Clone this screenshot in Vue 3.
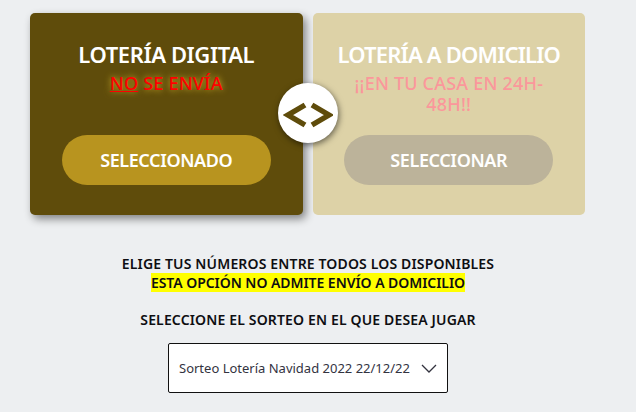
<script setup>
const cards = [
  { title: 'LOTERÍA A DOMICILIO', btn: 'SELECCIONAR' }
]
</script>

<template>
  <div class="page">
    <div class="cards">
      <section class="card active">
        <h2>LOTERÍA DIGITAL</h2>
        <p class="sub"><u>NO</u> SE ENVÍA</p>
        <button class="btn">SELECCIONADO</button>
      </section>
      <section class="card inactive">
        <h2>{{ cards[0].title }}</h2>
        <p class="sub">¡¡EN TU CASA EN 24H-48H!!</p>
        <button class="btn">{{ cards[0].btn }}</button>
      </section>
      <div class="swap">
        <svg width="50" height="26" viewBox="0 0 50 26" fill="none" stroke="#5f4c0b" stroke-width="5.5">
          <path d="M22 3 L5 13 L22 23" />
          <path d="M29 3 L46 13 L29 23" />
        </svg>
      </div>
    </div>
    <div class="info">
      <p>ELIGE TUS NÚMEROS ENTRE TODOS LOS DISPONIBLES</p>
      <p class="tight"><mark>ESTA OPCIÓN NO ADMITE ENVÍO A DOMICILIO</mark></p>
    </div>
    <p class="label">SELECCIONE EL SORTEO EN EL QUE DESEA JUGAR</p>
    <div class="select">
      <span>Sorteo Lotería Navidad 2022 22/12/22</span>
      <svg width="16" height="9" viewBox="0 0 16 9" fill="none" stroke="#33333f" stroke-width="1.3">
        <path d="M1 1 L8 8 L15 1" />
      </svg>
    </div>
  </div>
</template>

<style>
html, body { margin: 0; background: #edeff1; }
</style>

<style scoped>
.page {
  width: 616px;
  height: 412px;
  box-sizing: border-box;
  padding-top: 13px;
  overflow: hidden;
  background: #edeff1;
  font-family: "Noto Sans", "Open Sans", sans-serif;
  color: #0e0e12;
  display: flex;
  flex-direction: column;
  align-items: center;
}
.cards {
  position: relative;
  display: flex;
  gap: 10px;
  width: 555px;
  align-self: flex-start;
  margin-left: 30px;
}
.card {
  width: 272.5px;
  height: 202px;
  box-sizing: border-box;
  border-radius: 5px;
  padding: 27px 32px 0;
  display: flex;
  flex-direction: column;
  align-items: center;
  text-align: center;
}
.active {
  background: #5f4c0b;
  box-shadow: 3px 4px 8px rgba(0, 0, 0, 0.45);
}
.inactive { background: #ddd2a7; }
h2 {
  margin: 0;
  font-size: 22px;
  line-height: 29px;
  font-weight: 600;
  letter-spacing: -0.4px;
  white-space: nowrap;
  color: #fff;
}
.inactive h2 { letter-spacing: -0.8px; }
.sub {
  margin: 4px 0 0;
  height: 48px;
  font-size: 18px;
  line-height: 21px;
  letter-spacing: 0.2px;
  font-weight: 500;
}
.active .sub {
  color: #ff0000;
  text-shadow: 0 0 6px #d8ba30;
}
.inactive .sub {
  color: #fb979b;
  padding: 0 2px;
  width: 200px;
}
.btn {
  margin-top: 14px;
  width: 209px;
  height: 50px;
  flex: none;
  border: 0;
  border-radius: 25px;
  color: #fff;
  font: 600 18px "Noto Sans", sans-serif;
  letter-spacing: -0.4px;
}
.active .btn { background: #b8941f; }
.inactive .btn { background: #bcb39a; }
.swap {
  position: absolute;
  left: 248px;
  top: 70px;
  width: 60px;
  height: 60px;
  border-radius: 50%;
  background: #fff;
  display: flex;
  align-items: center;
  justify-content: center;
  box-shadow: 1px 2px 6px rgba(0, 0, 0, 0.55);
}
.swap svg { margin-top: 3px; }
.info {
  margin-top: 40px;
  font-size: 14px;
  line-height: 18.5px;
  font-weight: 600;
  letter-spacing: 0.15px;
  text-align: center;
  white-space: nowrap;
}
.info p { margin: 0; }
.info .tight { letter-spacing: -0.05px; }
mark { background: #ffff00; color: inherit; }
.label {
  margin: 18px 0 0;
  font-size: 14px;
  line-height: 19px;
  font-weight: 600;
  letter-spacing: 0.15px;
  white-space: nowrap;
}
.select {
  margin-top: 14px;
  width: 280px;
  height: 50px;
  flex: none;
  box-sizing: border-box;
  background: #fff;
  border: 1px solid #111;
  border-radius: 2px;
  padding: 0 10px;
  display: flex;
  align-items: center;
  justify-content: space-between;
  font-size: 13px;
  color: #33333f;
  white-space: nowrap;
}
</style>
